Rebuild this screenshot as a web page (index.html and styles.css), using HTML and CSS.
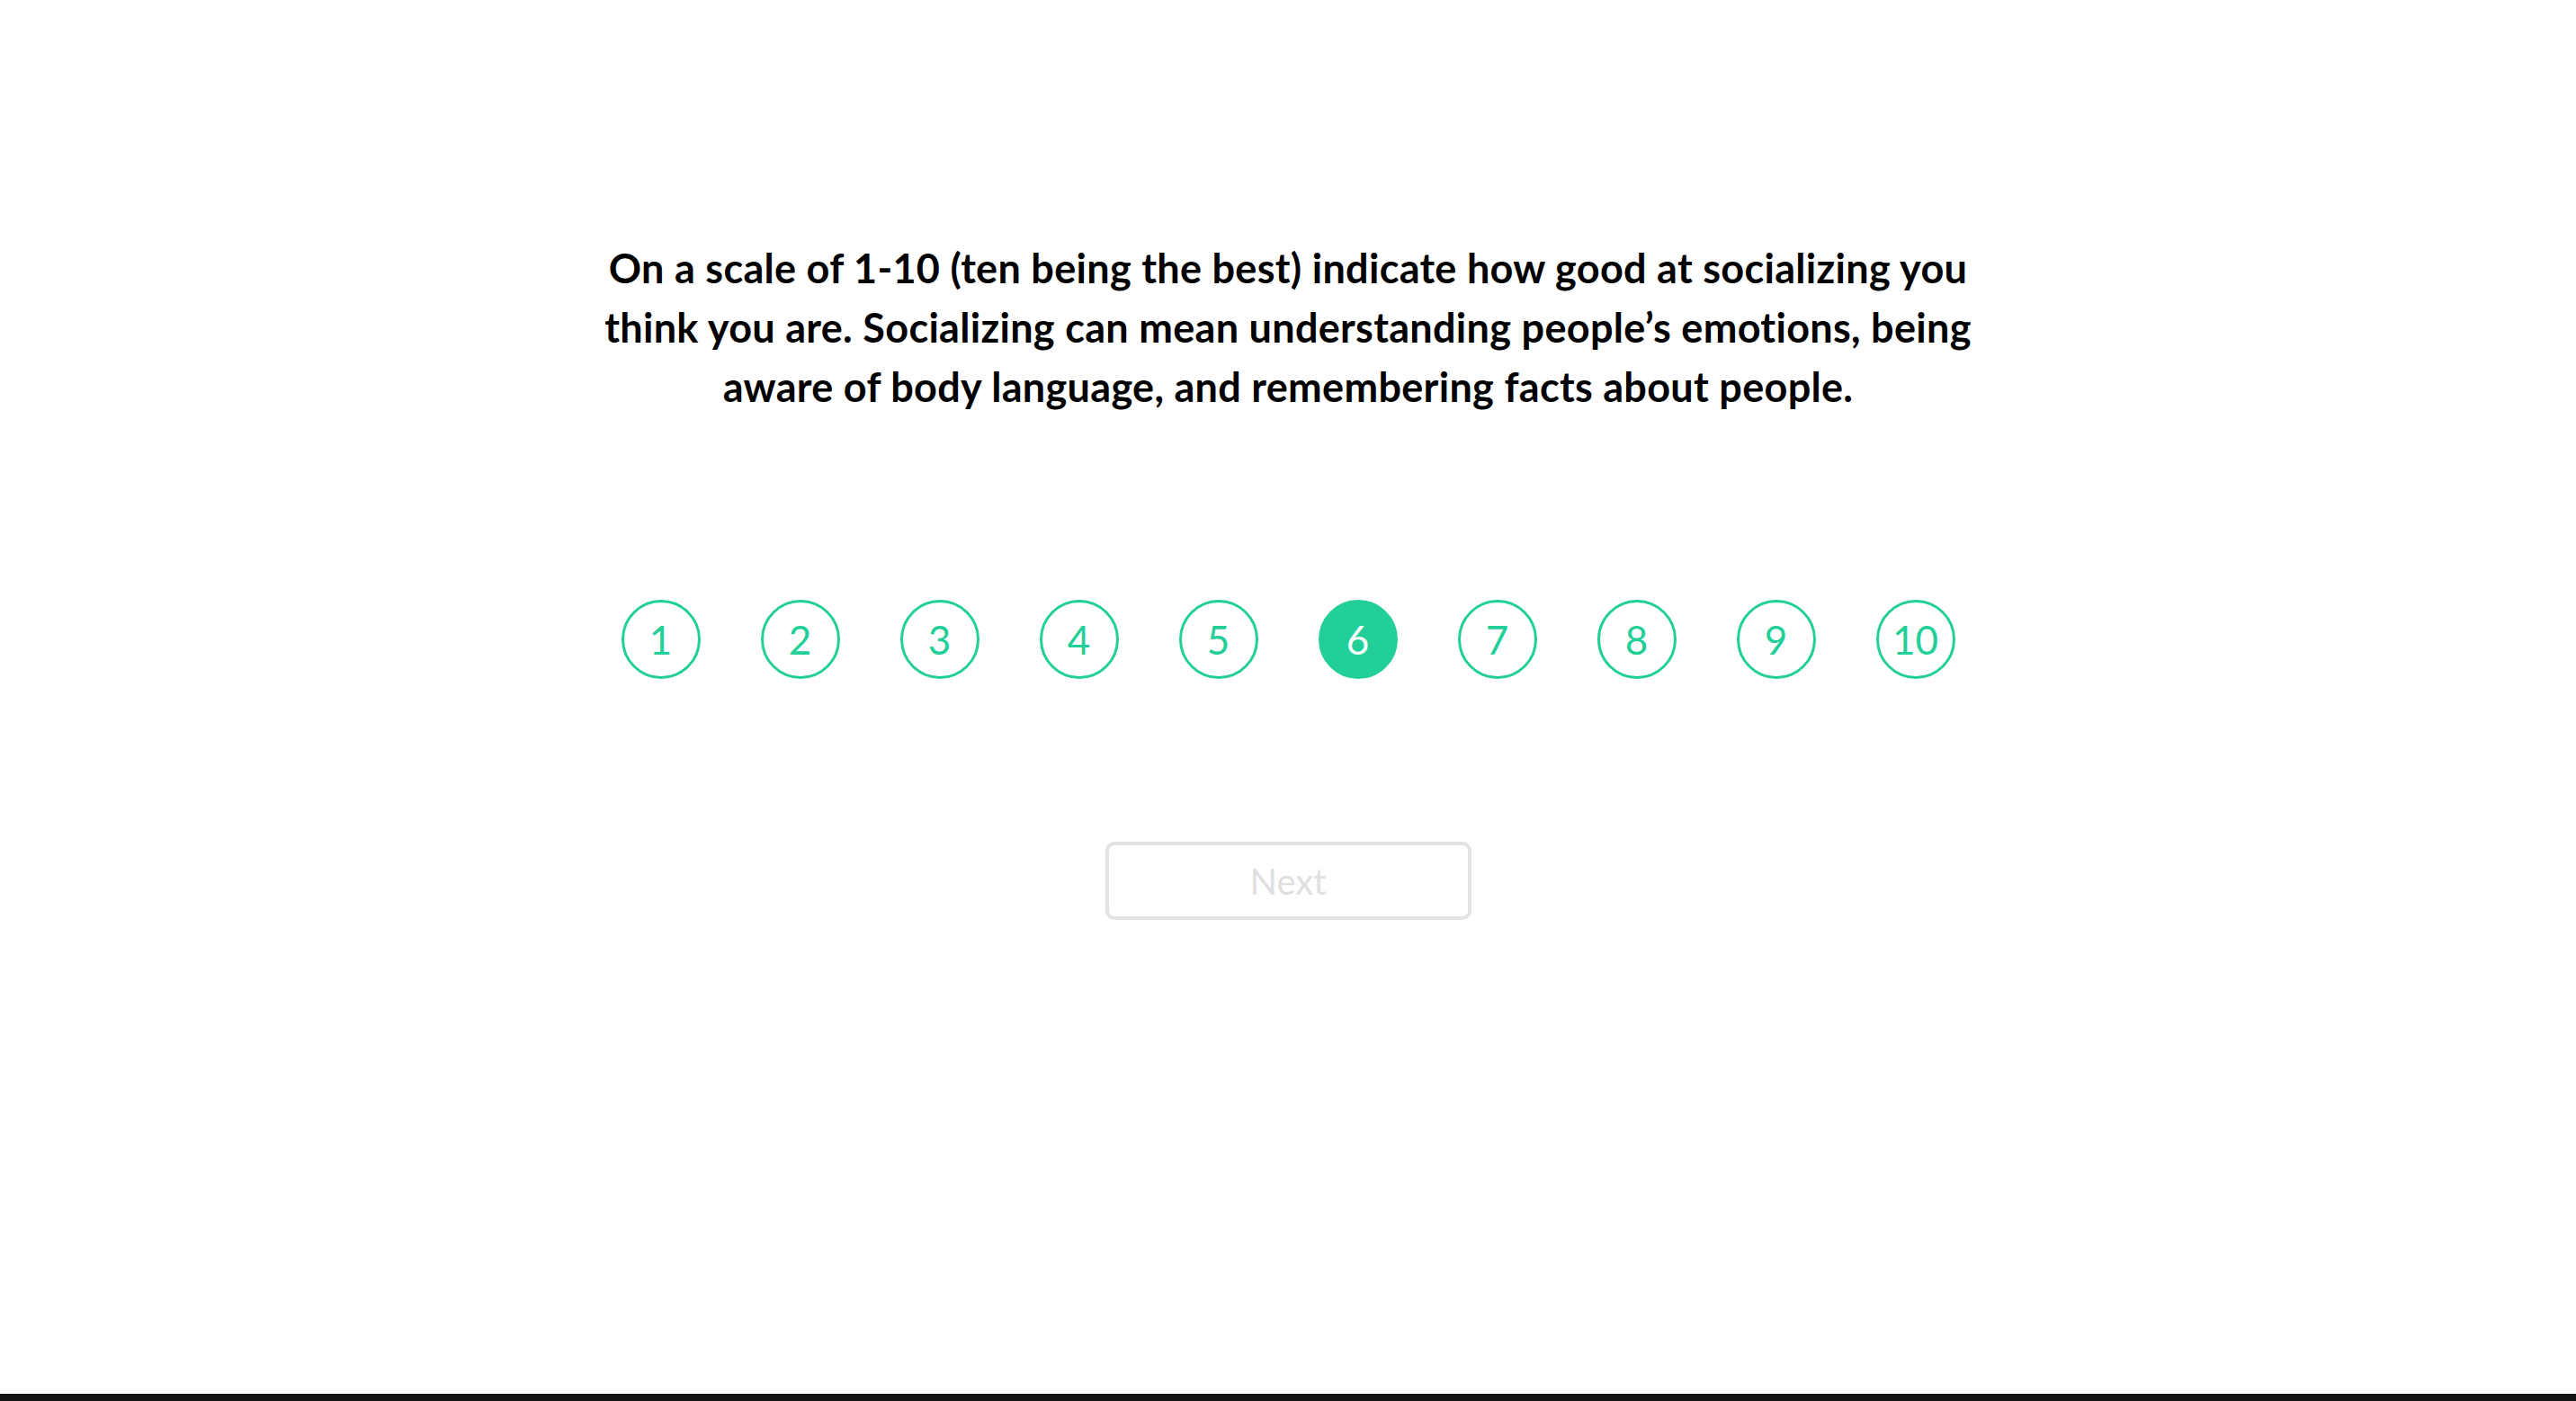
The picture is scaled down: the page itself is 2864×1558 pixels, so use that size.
FILE: index.html
```html
<!DOCTYPE html>
<html lang="en">
<head>
    <meta charset="UTF-8">
    <meta name="viewport" content="width=device-width, initial-scale=1.0">
    <title>Question</title>
    <link rel="stylesheet" href="styles.css">
</head>
<body>
    <div class="page">
        <div class="quiz">
            <!-- Pergunta -->
            <p class="question">On a scale of 1-10 (ten being the best) indicate how good at socializing you think you are. Socializing can mean understanding people’s emotions, being aware of body language, and remembering facts about people.</p>

            <!-- Escala de 1 a 10 -->
            <div class="scale">
                <button class="option">1</button>
                <button class="option">2</button>
                <button class="option">3</button>
                <button class="option">4</button>
                <button class="option">5</button>
                <button class="option selected">6</button>
                <button class="option">7</button>
                <button class="option">8</button>
                <button class="option">9</button>
                <button class="option">10</button>
            </div>

            <button class="next" disabled>Next</button>
        </div>
    </div>
    <div class="bottom-bar"></div>
</body>
</html>
```

FILE: styles.css
```css
html, body {
    margin: 0;
    padding: 0;
}
body {
    background-color: #fff;
    color: #000;
    font-family: Lato, "Open Sans", sans-serif;
    height: 1558px;
    display: flex;
    flex-direction: column;
    overflow: hidden;
}
.page {
    flex: 1;
    display: flex;
    justify-content: center;
}
.quiz {
    display: flex;
    flex-direction: column;
    align-items: center;
    padding-top: 265px;
}
.question {
    margin: 0;
    width: 1565px;
    font-size: 45px;
    font-weight: bold;
    letter-spacing: 0.3px;
    line-height: 66px;
    text-align: center;
}
.scale {
    display: flex;
    gap: 67px;
    margin-top: 204px;
}
.option {
    width: 88px;
    height: 88px;
    border: 3.5px solid #22cf99;
    border-radius: 50%;
    background-color: #fff;
    color: #22cf99;
    font-family: Lato, sans-serif;
    font-size: 44px;
    padding: 0;
    display: flex;
    align-items: center;
    justify-content: center;
    cursor: pointer;
    box-sizing: border-box;
}
.option.selected {
    background-color: #22cf99;
    color: #fff;
}
.next {
    margin-top: 181px;
    width: 407px;
    height: 87px;
    border: 4px solid #e3e3e3;
    border-radius: 10px;
    background-color: #fff;
    color: #dfdfdf;
    font-family: Lato, sans-serif;
    font-size: 40px;
    box-sizing: border-box;
}
.bottom-bar {
    height: 8px;
    background-color: #141416;
}
```
